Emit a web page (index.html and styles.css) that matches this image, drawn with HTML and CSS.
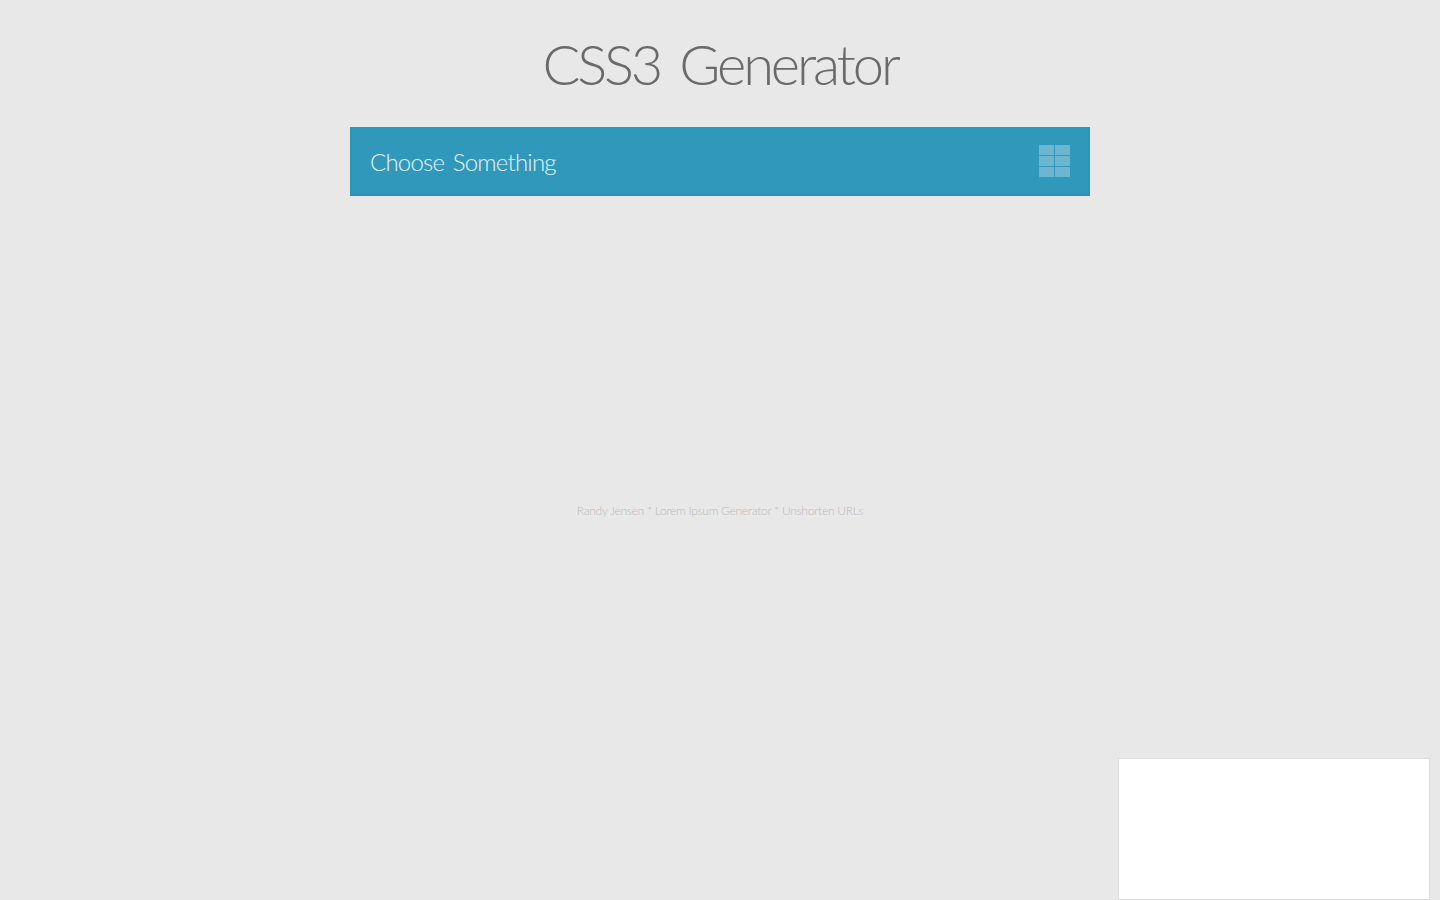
FILE: index.html
```html
<!DOCTYPE html>
<html lang="en">
<head>
<meta charset="utf-8">
<title>CSS3 Generator</title>
<link rel="stylesheet" href="styles.css">
</head>
<body>
<div class="page">
  <h1 class="title">CSS3 Generator</h1>
  <div class="chooser">
    <span class="chooser-label">Choose Something</span>
    <svg class="chooser-icon" width="31" height="32" viewBox="0 0 31 32" aria-hidden="true">
      <rect x="0" y="0" width="15" height="10"/><rect x="16" y="0" width="15" height="10"/>
      <rect x="0" y="11" width="15" height="10"/><rect x="16" y="11" width="15" height="10"/>
      <rect x="0" y="22" width="15" height="10"/><rect x="16" y="22" width="15" height="10"/>
    </svg>
  </div>
  <footer class="credits">
    <a>Randy Jensen</a> * <a>Lorem Ipsum Generator</a> * <a>Unshorten URLs</a>
  </footer>
</div>
<aside class="ad-box"></aside>
</body>
</html>
```
FILE: styles.css
```css
html, body {
  margin: 0;
  height: 100%;
  background: #e8e8e8;
  overflow: hidden;
}
body {
  font-family: Lato, "Open Sans", sans-serif;
  font-weight: 300;
}
.page {
  width: 740px;
  margin: 0 auto;
  display: flex;
  flex-direction: column;
}
.title {
  margin: 0;
  height: 127px;
  padding-top: 28px;
  box-sizing: border-box;
  font-size: 56px;
  line-height: 72px;
  font-weight: 300;
  letter-spacing: -3.1px;
  word-spacing: 7px;
  color: #6a6a6a;
  text-align: center;
  white-space: nowrap;
}
.chooser {
  height: 69px;
  box-sizing: border-box;
  padding: 0 20px 1px;
  display: flex;
  align-items: center;
  justify-content: space-between;
  background: #3098bb;
  box-shadow: inset 0 -2px 3px rgba(0, 0, 0, .05), inset 0 0 2px rgba(0, 0, 0, .05);
}
.chooser-label {
  font-size: 24px;
  font-weight: 300;
  letter-spacing: -.8px;
  word-spacing: 3px;
  color: #e4f5fb;
}
.chooser-icon {
  fill: #6cb6d2;
  display: block;
}
.credits {
  margin-top: 305px;
  text-align: center;
  font-size: 12px;
  line-height: 20px;
  letter-spacing: -.27px;
  color: #bababa;
  font-weight: 300;
}
.ad-box {
  position: fixed;
  left: 1118px;
  top: 758px;
  width: 310px;
  height: 140px;
  background: #fff;
  border: 1px solid #dcdcdc;
}
```
